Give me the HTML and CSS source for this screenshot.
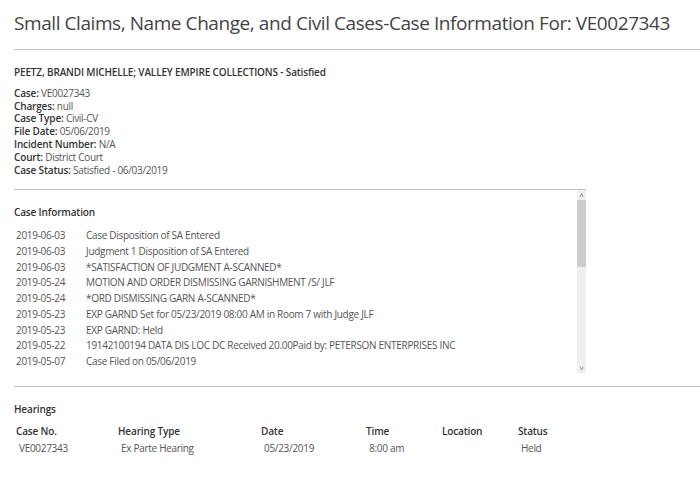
FILE: index.html
```html
<!DOCTYPE html>
<html lang="en">
<head>
    <meta charset="UTF-8">
    <title>Case Information For: VE0027343</title>
    <link rel="stylesheet" href="styles.css">
</head>
<body>
    <div class="page">
        <!-- Page Title -->
        <h1 class="page-title">Small Claims, Name Change, and Civil Cases-Case Information For: VE0027343</h1>

        <!-- Case Summary -->
        <div class="case-summary">
            <div class="parties">PEETZ, BRANDI MICHELLE; VALLEY EMPIRE COLLECTIONS - Satisfied</div>
            <div class="detail"><b>Case:</b> VE0027343</div>
            <div class="detail"><b>Charges:</b> null</div>
            <div class="detail"><b>Case Type:</b> Civil-CV</div>
            <div class="detail"><b>File Date:</b> 05/06/2019</div>
            <div class="detail"><b>Incident Number:</b> N/A</div>
            <div class="detail"><b>Court:</b> District Court</div>
            <div class="detail"><b>Case Status:</b> Satisfied - 06/03/2019</div>
        </div>

        <!-- Case Information (scroll box) -->
        <div class="case-box">
            <div class="case-list">
                <div class="section-title">Case Information</div>
                <div class="event"><span class="event-date">2019-06-03</span><span>Case Disposition of SA Entered</span></div>
                <div class="event"><span class="event-date">2019-06-03</span><span>Judgment 1 Disposition of SA Entered</span></div>
                <div class="event"><span class="event-date">2019-06-03</span><span>*SATISFACTION OF JUDGMENT A-SCANNED*</span></div>
                <div class="event"><span class="event-date">2019-05-24</span><span>MOTION AND ORDER DISMISSING GARNISHMENT /S/ JLF</span></div>
                <div class="event"><span class="event-date">2019-05-24</span><span>*ORD DISMISSING GARN A-SCANNED*</span></div>
                <div class="event"><span class="event-date">2019-05-23</span><span>EXP GARND Set for 05/23/2019 08:00 AM in Room 7 with Judge JLF</span></div>
                <div class="event"><span class="event-date">2019-05-23</span><span>EXP GARND: Held</span></div>
                <div class="event"><span class="event-date">2019-05-22</span><span>19142100194 DATA DIS LOC DC Received 20.00Paid by: PETERSON ENTERPRISES INC</span></div>
                <div class="event"><span class="event-date">2019-05-07</span><span>Case Filed on 05/06/2019</span></div>
            </div>
            <div class="scrollbar">
                <div class="scroll-arrow">&#708;</div>
                <div class="scroll-thumb"></div>
                <div class="scroll-track"></div>
                <div class="scroll-arrow">&#709;</div>
            </div>
        </div>

        <!-- Hearings -->
        <div class="hearings">
            <div class="section-title">Hearings</div>
            <div class="hearing-grid">
                <div class="th">Case No.</div>
                <div class="th">Hearing Type</div>
                <div class="th">Date</div>
                <div class="th">Time</div>
                <div class="th">Location</div>
                <div class="th">Status</div>

                <div class="td">VE0027343</div>
                <div class="td">Ex Parte Hearing</div>
                <div class="td">05/23/2019</div>
                <div class="td">8:00 am</div>
                <div class="td"></div>
                <div class="td">Held</div>
            </div>
        </div>
    </div>
</body>
</html>
```

FILE: styles.css
```css
/* General Reset */
* {
    margin: 0;
    padding: 0;
    box-sizing: border-box;
}

body {
    font-family: 'Open Sans', 'Liberation Sans', sans-serif;
    font-size: 10px;
    letter-spacing: -0.3px;
    color: #555;
    background: #fff;
}

.page {
    padding-left: 14px;
}

b {
    font-weight: 600;
    color: #333;
    letter-spacing: -0.15px;
}

/* Title */
.page-title {
    font-size: 19px;
    font-weight: 400;
    letter-spacing: -0.43px;
    color: #444;
    line-height: 26px;
    padding-top: 10px;
    padding-bottom: 13px;
    border-bottom: 1px solid #c4c4c4;
    white-space: nowrap;
}

/* Case Summary */
.case-summary {
    padding-top: 16px;
    line-height: 12.8px;
}

.parties {
    font-weight: 600;
    color: #333;
    letter-spacing: -0.15px;
    margin-bottom: 8px;
}

/* Case Information Box */
.case-box {
    display: flex;
    width: 572px;
    height: 184px;
    margin-top: 13px;
    border-top: 1px solid #c4c4c4;
}

.case-list {
    flex: 1;
    overflow: hidden;
}

.section-title {
    font-weight: 600;
    color: #333;
    letter-spacing: -0.15px;
    padding-top: 15px;
    line-height: 14px;
    margin-bottom: 7px;
}

.case-list .section-title {
    margin-bottom: 9px;
}

.event {
    display: flex;
    line-height: 15.7px;
    padding-left: 2px;
}

.event-date {
    width: 70px;
}

/* Fake scrollbar */
.scrollbar {
    width: 9px;
    display: flex;
    flex-direction: column;
    background: #f0f0f0;
}

.scroll-arrow {
    height: 10px;
    font-size: 8px;
    line-height: 10px;
    text-align: center;
    color: #777;
}

.scroll-thumb {
    height: 67px;
    background: #cdcdcd;
}

.scroll-track {
    flex: 1;
}

/* Hearings */
.hearings {
    margin-top: 13px;
    border-top: 1px solid #c4c4c4;
}

.hearing-grid {
    display: grid;
    grid-template-columns: 102px 143px 105px 76px 76px auto;
    padding-left: 2px;
}

.th {
    font-weight: 600;
    color: #333;
    letter-spacing: -0.15px;
    line-height: 17px;
}

.td {
    padding-left: 3px;
    line-height: 17px;
}
```
